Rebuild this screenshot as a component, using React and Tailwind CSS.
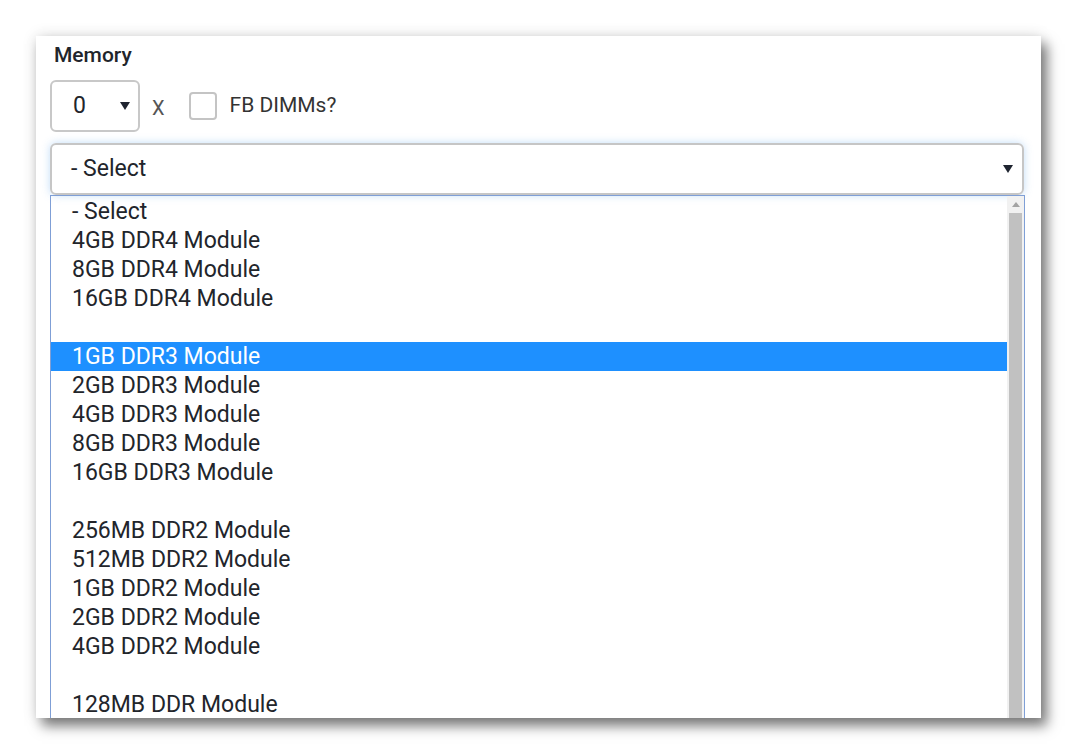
import React from 'react'

const groups = [
  ['- Select', '4GB DDR4 Module', '8GB DDR4 Module', '16GB DDR4 Module'],
  ['1GB DDR3 Module', '2GB DDR3 Module', '4GB DDR3 Module', '8GB DDR3 Module', '16GB DDR3 Module'],
  ['256MB DDR2 Module', '512MB DDR2 Module', '1GB DDR2 Module', '2GB DDR2 Module', '4GB DDR2 Module'],
  ['128MB DDR Module'],
]

const Caret = () => (
  <svg width="10" height="8" viewBox="0 0 10 8" className="shrink-0">
    <path d="M0 0h10L5 8z" fill="#1f2430" />
  </svg>
)

const App = () => {
  return (
    <div className="w-screen h-[754px] bg-white pl-[36px] pt-[36px] font-['Roboto',sans-serif] text-[#22252b]">
      {/* Card */}
      <div className="w-[1005px] h-[682px] bg-white overflow-hidden shadow-[6px_8px_12px_rgba(0,0,0,0.5),0_0_14px_rgba(0,0,0,0.12)] px-[14px] pt-[6px]">
        <div className="text-[21px] font-medium leading-[26px] ml-[4px]">Memory</div>

        <div className="flex items-center mt-[12px]">
          <div className="w-[90px] h-[52px] border-2 border-[#c8c8c8] rounded-[6px] flex items-center justify-between pl-[21px] pr-[8px]">
            <span className="text-[23px]">0</span>
            <Caret />
          </div>
          <span className="ml-[12px] mt-[4px] text-[20px] text-[#555]">X</span>
          <div className="ml-[24px] w-[28px] h-[28px] border-2 border-[#c4c4c4] rounded-[4px]" />
          <span className="ml-[13px] text-[21px] text-[#333]">FB DIMMs?</span>
        </div>

        {/* Select */}
        <div className="mt-[11px] w-[974px] h-[52px] border-2 border-[#c6c6c6] rounded-[6px] shadow-[0_0_8px_rgba(120,180,240,0.45)] flex items-center justify-between pl-[19px] pr-[9px]">
          <span className="text-[23px]">- Select</span>
          <Caret />
        </div>

        {/* Dropdown list */}
        <div className="w-[975px] h-[560px] border border-[#7f9fd6] flex">
          <div className="flex-1 pt-[1px]">
            {groups.map((g, gi) => (
              <div key={gi}>
                {g.map((item) => (
                  <div
                    key={item}
                    className={
                      item === '1GB DDR3 Module'
                        ? 'h-[29px] leading-[29px] pl-[21px] text-[23px] bg-[#1e90ff] text-white'
                        : 'h-[29px] leading-[29px] pl-[21px] text-[23px]'
                    }
                  >
                    {item}
                  </div>
                ))}
                {gi < groups.length - 1 && <div className="h-[29px]" />}
              </div>
            ))}
          </div>
          {/* Scrollbar */}
          <div className="w-[17px] bg-[#f1f1f1] flex flex-col items-center">
            <div className="h-[17px] flex items-center justify-center">
              <svg width="8" height="5" viewBox="0 0 8 5">
                <path d="M0 5h8L4 0z" fill="#a3a3a3" />
              </svg>
            </div>
            <div className="w-[13px] flex-1 bg-[#c1c1c1]" />
          </div>
        </div>
      </div>
    </div>
  )
}

export default App
